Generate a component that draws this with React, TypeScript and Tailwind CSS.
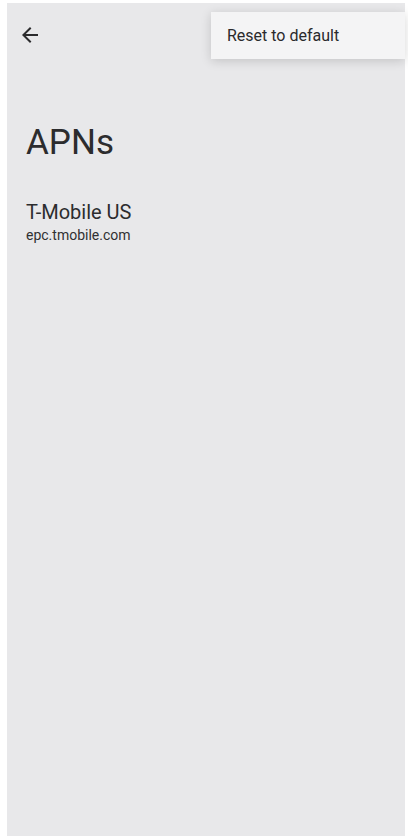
import React from "react";

const font = { fontFamily: "Roboto, 'Noto Sans', sans-serif" };

function BackArrow() {
  return (
    <svg viewBox="0 0 24 24" className="h-6 w-6" fill="#2b2b2d">
      <path d="M20 11H7.83l5.59-5.59L12 4l-8 8 8 8 1.41-1.41L7.83 13H20v-2z" />
    </svg>
  );
}

export default function App() {
  return (
    <div className="w-[408px] h-[837px] bg-white pl-[7px] pr-[3px] pt-[3px] pb-[1px]" style={font}>
      <div className="relative h-full w-full bg-[#e8e8ea] text-[#2c2c2e] flex flex-col">
        <div className="h-16 flex items-center pl-[11px]">
          <BackArrow />
        </div>

        {/* page title */}
        <h1 className="mt-[54px] pl-[19px] text-[35px] leading-[44px] font-normal">APNs</h1>

        <div className="mt-[35px] pl-[19px]">
          <div className="text-[20px] leading-[24px]">T-Mobile US</div>
          <div className="text-[14px] leading-[20px] mt-[1px] text-[#303032]">epc.tmobile.com</div>
        </div>

        <div className="absolute right-0 top-[9px] w-[194px] h-[47px] bg-[#f4f4f5] flex items-center pl-4 shadow-[0_2px_10px_rgba(0,0,0,0.16)]">
          <span className="text-[16px] leading-[24px] text-[#2a2a2c]">Reset to default</span>
        </div>
      </div>
    </div>
  );
}
